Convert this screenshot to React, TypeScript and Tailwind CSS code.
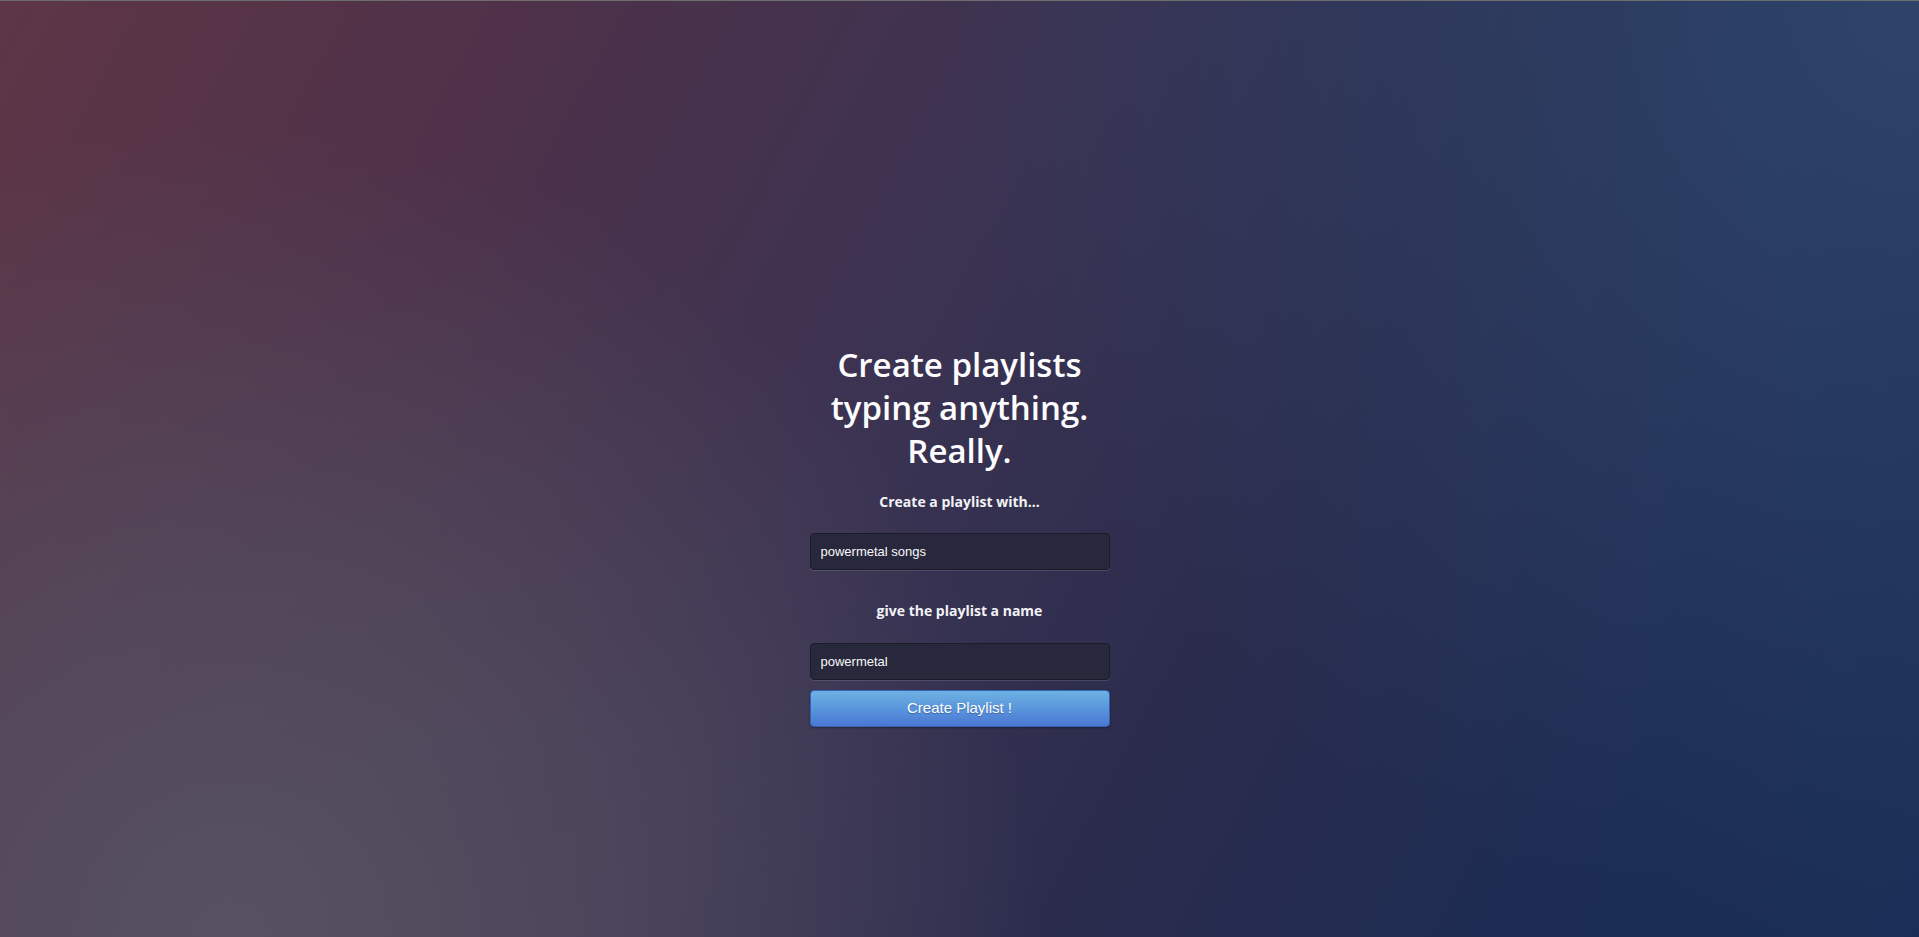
import { useState } from "react";

const Field = ({ value, onChange }: { value: string; onChange: (v: string) => void }) => (
  <input
    type="text"
    value={value}
    onChange={(e) => onChange(e.target.value)}
    className="block h-[37px] w-full rounded-[4px] border border-[#1b1b29] bg-[#28283c] px-[10px] font-['Liberation_Sans',Arial,sans-serif] text-[13px] text-[#f8f8fb] shadow-[0_1px_0_rgba(255,255,255,0.12)] outline-none"
  />
);

const App = () => {
  const [query, setQuery] = useState("powermetal songs");
  const [name, setName] = useState("powermetal");

  return (
    <div className="min-h-screen border-t border-[#6d6d6d] bg-[radial-gradient(circle_at_12%_100%,rgba(86,82,98,1)_0%,rgba(86,82,98,0.6)_20%,rgba(86,82,98,0)_42%),radial-gradient(circle_at_100%_0%,rgba(46,68,106,1)_0%,rgba(46,68,106,0)_45%),linear-gradient(118deg,#5e3646_0%,#4e3149_22%,#3b3352_45%,#2a2c4d_65%,#1c2c54_85%,#192e56_100%)]">
      <div className="flex flex-col items-center pt-[342px] font-['Open_Sans',sans-serif] text-white">
        <div className="w-[300px]">
          <h1 className="text-center text-[33px] font-semibold leading-[43px] text-[#fcfcfe]">
            Create playlists typing anything. Really.
          </h1>

          <p className="mt-5 text-center text-[14px] font-bold leading-5 text-[#f2f2f6]">
            Create a playlist with...
          </p>
          <div className="mt-[21px]">
            <Field value={query} onChange={setQuery} />
          </div>

          <p className="mt-[31px] text-center text-[14px] font-bold leading-5 text-[#f2f2f6]">
            give the playlist a name
          </p>
          <div className="mt-[22px]">
            <Field value={name} onChange={setName} />
          </div>

          <button
            type="button"
            className="mt-[10px] block h-[37px] w-full rounded-[4px] border border-[#3462b4] bg-[linear-gradient(to_bottom,#6db2e3_0%,#5a95dc_50%,#4a78d4_100%)] font-['Liberation_Sans',Arial,sans-serif] text-[15px] text-white shadow-[0_1px_2px_rgba(0,0,0,0.35)] [text-shadow:0_1px_1px_rgba(0,0,0,0.3)]"
          >
            Create Playlist !
          </button>
        </div>
      </div>
    </div>
  );
};

export default App;
